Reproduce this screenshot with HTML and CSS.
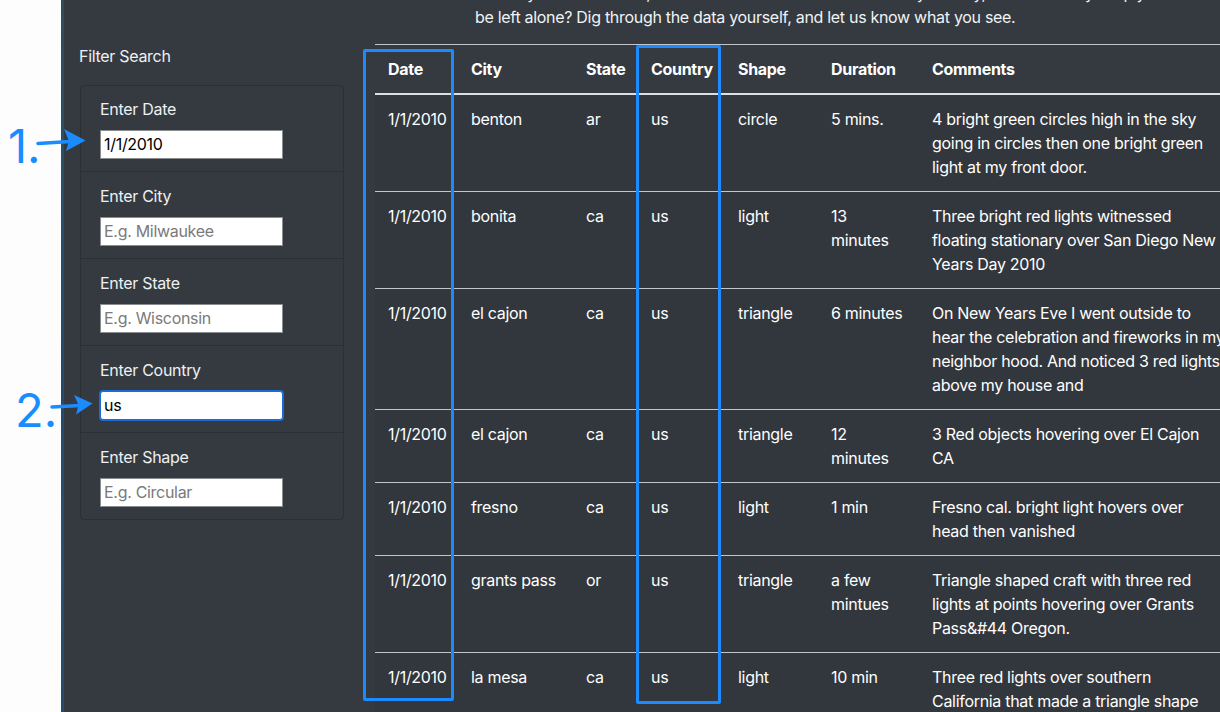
FILE: index.html
```html
<!DOCTYPE html>
<html lang="en">
<head>
<meta charset="utf-8">
<title>UFO Sightings</title>
<link rel="stylesheet" href="styles.css">
</head>
<body>
<div class="page">
  <div class="gutter"></div>
  <div class="edge"></div>
  <div class="app">
    <aside class="sidebar">
      <div class="filter-title">Filter Search</div>
      <ul class="filters">
        <li class="filter">
          <label for="datetime">Enter Date</label>
          <input id="datetime" type="text" value="1/1/2010" placeholder="1/11/2011">
        </li>
        <li class="filter">
          <label for="city">Enter City</label>
          <input id="city" type="text" placeholder="E.g. Milwaukee">
        </li>
        <li class="filter">
          <label for="state">Enter State</label>
          <input id="state" type="text" placeholder="E.g. Wisconsin">
        </li>
        <li class="filter">
          <label for="country">Enter Country</label>
          <input id="country" class="is-focused" type="text" value="us" placeholder="E.g. United States">
        </li>
        <li class="filter">
          <label for="shape">Enter Shape</label>
          <input id="shape" type="text" placeholder="E.g. Circular">
        </li>
      </ul>
    </aside>
    <main class="content">
      <p class="intro">
        <span class="intro-line">Are they friends or foes, visitors or invaders? Should we study the sky, or should they simply</span>
        <span class="intro-line">be left alone? Dig through the data yourself, and let us know what you see.</span>
      </p>
      <table class="ufo-table">
        <colgroup>
          <col class="c-date"><col class="c-city"><col class="c-state"><col class="c-country"><col class="c-shape"><col class="c-duration"><col class="c-comments">
        </colgroup>
        <thead>
          <tr><th>Date</th><th>City</th><th>State</th><th>Country</th><th>Shape</th><th>Duration</th><th>Comments</th></tr>
        </thead>
        <tbody>
          <tr><td>1/1/2010</td><td>benton</td><td>ar</td><td>us</td><td>circle</td><td>5 mins.</td><td>4 bright green circles high in the sky<br>going in circles then one bright green<br>light at my front door.</td></tr>
          <tr><td>1/1/2010</td><td>bonita</td><td>ca</td><td>us</td><td>light</td><td>13 minutes</td><td>Three bright red lights witnessed<br>floating stationary over San Diego New<br>Years Day 2010</td></tr>
          <tr><td>1/1/2010</td><td>el cajon</td><td>ca</td><td>us</td><td>triangle</td><td>6 minutes</td><td>On New Years Eve I went outside to<br>hear the celebration and fireworks in my<br>neighbor hood. And noticed 3 red lights<br>above my house and</td></tr>
          <tr><td>1/1/2010</td><td>el cajon</td><td>ca</td><td>us</td><td>triangle</td><td>12 minutes</td><td>3 Red objects hovering over El Cajon<br>CA</td></tr>
          <tr><td>1/1/2010</td><td>fresno</td><td>ca</td><td>us</td><td>light</td><td>1 min</td><td>Fresno cal. bright light hovers over<br>head then vanished</td></tr>
          <tr><td>1/1/2010</td><td>grants pass</td><td>or</td><td>us</td><td>triangle</td><td>a few mintues</td><td>Triangle shaped craft with three red<br>lights at points hovering over Grants<br>Pass&amp;#44 Oregon.</td></tr>
          <tr><td>1/1/2010</td><td>la mesa</td><td>ca</td><td>us</td><td>light</td><td>10 min</td><td>Three red lights over southern<br>California that made a triangle shape<br>in the night sky.</td></tr>
        </tbody>
      </table>
    </main>
  </div>
</div>

<div class="mark mark-date"></div>
<div class="mark mark-country"></div>
<div class="step step-1">1.</div>
<div class="step step-2">2.</div>
<svg class="arrows" width="120" height="712" viewBox="0 0 120 712" aria-hidden="true">
  <path d="M38 143.5 L70 141.5" stroke="#1a8cff" stroke-width="3.5" fill="none" stroke-linecap="round"/>
  <path d="M64 129 L85.5 140.5 L66 151 L69 141 Z" fill="#1a8cff"/>
  <path d="M52 407 L80 405.5" stroke="#1a8cff" stroke-width="3.5" fill="none" stroke-linecap="round"/>
  <path d="M74 395 L92.5 403.5 L76 414.5 L78.5 405 Z" fill="#1a8cff"/>
</svg>
</body>
</html>
```
FILE: styles.css
```css
html, body {
  margin: 0;
  padding: 0;
  height: 712px;
  overflow: hidden;
  background: #ffffff;
  font-family: "Inter", "Noto Sans", "Liberation Sans", sans-serif;
}

.page {
  display: flex;
  height: 712px;
}

.gutter {
  width: 61px;
  flex: none;
  background: #fdfdfd;
}

.edge {
  width: 3px;
  flex: none;
  background: linear-gradient(180deg, #2d4f5c 0%, #27506e 30%, #1f4a6e 55%, #285377 80%, #24486a 100%);
  box-shadow: inset -1px 0 0 #3e4852;
}

.app {
  flex: 1;
  min-width: 0;
  display: flex;
  background: #343a40;
  color: #f1f3f5;
  font-size: 16px;
  line-height: 24px;
  letter-spacing: -0.3px;
}

/* Sidebar */
.sidebar {
  width: 264px;
  flex: none;
  padding: 44px 15px 0 16px;
}

.filter-title {
  color: #eef0f2;
  margin-left: -1px;
  margin-bottom: 17px;
}

.filters {
  list-style: none;
  margin: 0;
  padding: 0;
  border: 1px solid #2b3035;
  border-radius: 4px;
}

.filter {
  padding: 12px 20px 12px 19px;
  border-top: 1px solid #2b3035;
  display: flex;
  flex-direction: column;
  align-items: flex-start;
  gap: 9px;
}

.filter:first-child {
  border-top: none;
  padding-top: 11px;
}

.filter label {
  color: #eef0f2;
  line-height: 24px;
}

.filter input {
  box-sizing: border-box;
  width: 183px;
  height: 29px;
  margin: 0;
  padding: 0 3px 1px;
  border: 1px solid #8a8d90;
  border-radius: 0;
  background: #ffffff;
  color: #000000;
  font-family: inherit;
  font-size: 16px;
  letter-spacing: -0.3px;
  outline: none;
}

.filter input::placeholder {
  color: #7a7a7a;
}

.filter input.is-focused {
  border: 1px solid #1c6ad6;
  border-radius: 3px;
  box-shadow: 0 0 0 1px #1c6ad6;
}

/* Main content */
.content {
  flex: 1;
  min-width: 0;
  padding-left: 16px;
  overflow: hidden;
}

.intro {
  margin: -19px 0 15px 0;
  padding-left: 100px;
  color: #f1f3f5;
}

.intro-line {
  display: block;
  white-space: nowrap;
}

.ufo-table {
  table-layout: fixed;
  width: 884px;
  border-collapse: collapse;
  background: #32373d;
  color: #ffffff;
}

.c-date { width: 84px; }
.c-city { width: 115px; }
.c-state { width: 65px; }
.c-country { width: 87px; }
.c-shape { width: 93px; }
.c-duration { width: 101px; }
.c-comments { width: 339px; }

.ufo-table th,
.ufo-table td {
  padding: 12px;
  text-align: left;
  vertical-align: top;
  line-height: 24px;
  border-top: 1px solid #c3c6c9;
}

.ufo-table th:first-child,
.ufo-table td:first-child {
  padding-left: 13px;
}

.ufo-table td:last-child {
  white-space: nowrap;
}

.ufo-table th {
  font-weight: 700;
  background: #343a40;
  border-bottom: 2px solid #dcdfe2;
}

/* Annotations overlaid on the screenshot */
.mark {
  position: absolute;
  box-sizing: border-box;
  border: 3px solid #1a8cff;
  border-radius: 2px;
}

.mark-date {
  left: 363px;
  top: 49px;
  width: 91px;
  height: 652px;
}

.mark-country {
  left: 636px;
  top: 45px;
  width: 85px;
  height: 659px;
}

.step {
  position: absolute;
  color: #1a8cff;
  font-family: "Inter", "Liberation Sans", sans-serif;
  font-size: 47px;
  line-height: 47px;
  font-weight: 400;
}

.step-1 {
  left: 8px;
  top: 122px;
}

.step-2 {
  left: 15px;
  top: 386px;
}

.arrows {
  position: absolute;
  left: 0;
  top: 0;
}
```
